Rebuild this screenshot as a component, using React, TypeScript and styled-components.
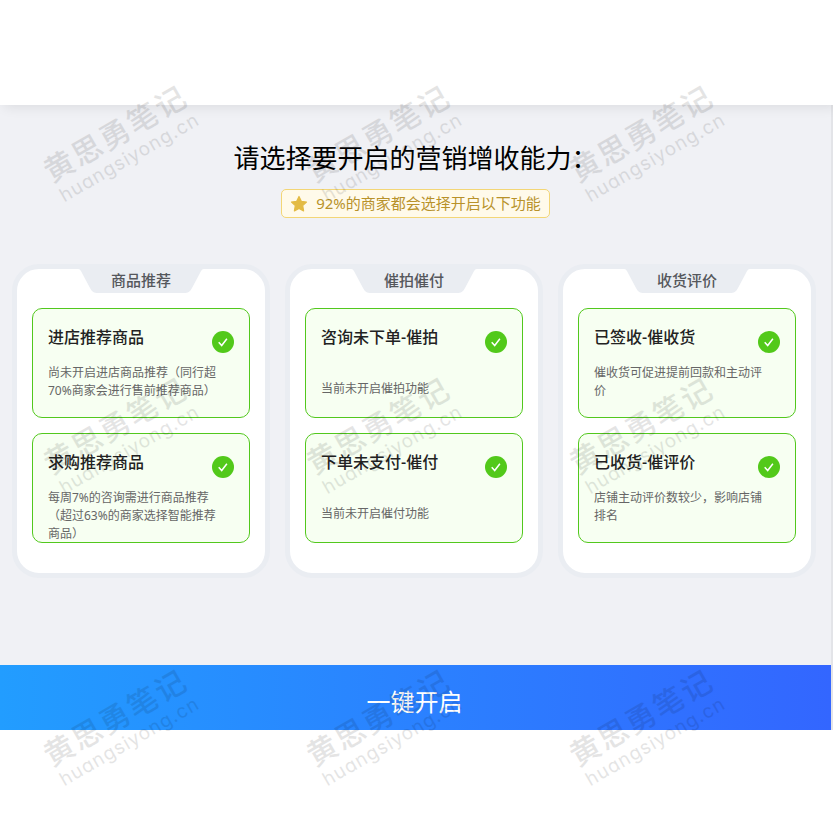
import React from "react";
import styled, { createGlobalStyle } from "styled-components";

const GlobalStyle = createGlobalStyle`
  * { box-sizing: border-box; }
  body { margin: 0; background: #fff; }
  body, button {
    font-family: "Noto Sans", "Noto Sans CJK SC", sans-serif;
    text-spacing-trim: space-all;
  }
`;

const Page = styled.div`
  position: relative;
  min-height: 100vh;
  overflow: hidden;
`;

const Header = styled.header`
  position: relative;
  height: 105px;
  background: #fff;
  box-shadow: 4px 2px 12px rgba(0, 0, 0, 0.09);
`;

const Panel = styled.main`
  display: flex;
  flex-direction: column;
  border-right: 2px solid #e3e4e8;
  background: #f0f1f5;
`;

const Intro = styled.section`
  display: flex;
  flex-direction: column;
  align-items: center;
  gap: 11px;
  padding-top: 33px;
`;

const Heading = styled.h1`
  margin: 0;
  font-size: 26px;
  line-height: 40px;
  font-weight: 400;
  color: #000;
`;

const Notice = styled.p`
  display: flex;
  align-items: center;
  gap: 8px;
  margin: 0;
  padding: 0 8px;
  border: 1px solid #f3d676;
  border-radius: 5px;
  background: #fffaea;
  color: #b8922a;
  font-size: 15px;
  line-height: 27px;
`;

const Columns = styled.div`
  display: grid;
  grid-template-columns: repeat(3, 1fr);
  gap: 15px;
  padding: 46px 15px 87px 12px;
`;

const Column = styled.section`
  display: flex;
  flex-direction: column;
  gap: 15px;
  padding: 0 15px 30px;
  border: 5px solid #eaedf2;
  border-radius: 27px;
  background: #fff;
`;

const Tab = styled.div`
  display: grid;
  justify-items: center;
  align-items: start;
  > * { grid-area: 1 / 1; }
`;

const TabShape = styled.svg`
  display: block;
`;

const TabTitle = styled.h2`
  margin: 0;
  font-size: 15px;
  line-height: 22px;
  font-weight: 500;
  color: #55575c;
`;

const Item = styled.label`
  display: grid;
  grid-template-columns: 1fr 22px;
  align-content: start;
  row-gap: 15px;
  height: 110px;
  padding: 16px 15px 0;
  border: 1px solid #52c81d;
  border-radius: 10px;
  background: #f7fff2;
  cursor: pointer;
`;

const ItemTitle = styled.span`
  font-size: 16px;
  line-height: 24px;
  font-weight: 500;
  color: #222;
`;

const Check = styled.input`
  appearance: none;
  width: 22px;
  height: 22px;
  margin: 0;
  grid-area: 1 / 1;
  border-radius: 50%;
  background: #fff;
  border: 1px solid #ccc;
  &:checked { background: #52c91a; border: 0; }
`;

const CheckWrap = styled.span`
  display: grid;
  align-self: end;
  place-items: center;
  margin-bottom: -4px;
`;

const Tick = styled.svg`
  grid-area: 1 / 1;
  pointer-events: none;
`;

const Description = styled.span<{ $single: boolean }>`
  grid-column: 1 / -1;
  max-width: 174px;
  font-size: 12px;
  line-height: ${(p) => (p.$single ? "50px" : "18px")};
  color: #666;
`;

const Submit = styled.button`
  height: 65px;
  padding: 8px 2px 0 0;
  border: 0;
  background: linear-gradient(90deg, #229dff, #3366ff);
  color: #fff;
  font-size: 24px;
  line-height: 36px;
  cursor: pointer;
`;

const Watermarks = styled.div`
  position: absolute;
  inset: -2px 0 0 -10px;
  display: grid;
  grid-template-columns: repeat(3, 263px);
  grid-auto-rows: 292px;
  pointer-events: none;
  user-select: none;
`;

const Mark = styled.div`
  display: flex;
  flex-direction: column;
  align-items: center;
  justify-content: center;
  transform: rotate(-30deg);
  color: #000;
  opacity: 0.1;
  white-space: nowrap;
`;

const MarkName = styled.span`
  font-size: 30px;
  line-height: 32px;
  font-weight: 500;
  letter-spacing: 2px;
`;

const MarkSite = styled.span`
  font-family: Inter, sans-serif;
  font-feature-settings: "cv11";
  font-size: 19px;
  line-height: 24px;
  letter-spacing: 1px;
`;

type Ability = { title: string; text: string; single?: boolean };

const groups: { name: string; items: Ability[] }[] = [
  {
    name: "商品推荐",
    items: [
      { title: "进店推荐商品", text: "尚未开启进店商品推荐（同行超70%商家会进行售前推荐商品）" },
      { title: "求购推荐商品", text: "每周7%的咨询需进行商品推荐（超过63%的商家选择智能推荐商品）" },
    ],
  },
  {
    name: "催拍催付",
    items: [
      { title: "咨询未下单-催拍", text: "当前未开启催拍功能", single: true },
      { title: "下单未支付-催付", text: "当前未开启催付功能", single: true },
    ],
  },
  {
    name: "收货评价",
    items: [
      { title: "已签收-催收货", text: "催收货可促进提前回款和主动评价" },
      { title: "已收货-催评价", text: "店铺主动评价数较少，影响店铺排名" },
    ],
  },
];

function Star() {
  return (
    <svg width="18" height="18" viewBox="0 0 18 18" aria-hidden="true">
      <path
        d="M9 1.5l2.3 4.8 5.2.7-3.8 3.6.9 5.3L9 13.4l-4.6 2.5.9-5.3L1.5 7l5.2-.7z"
        fill="#e3bb45"
        stroke="#e3bb45"
        strokeWidth="1.2"
        strokeLinejoin="round"
      />
    </svg>
  );
}

function AbilityItem({ title, text, single = false }: Ability) {
  return (
    <Item>
      <ItemTitle>{title}</ItemTitle>
      <CheckWrap>
        <Check type="checkbox" defaultChecked />
        <Tick width="22" height="22" viewBox="0 0 22 22" aria-hidden="true">
          <path d="M6.7 11.2l3 3.3 5.2-6.8" fill="none" stroke="#fff" strokeWidth="1.5" />
        </Tick>
      </CheckWrap>
      <Description $single={single}>{text}</Description>
    </Item>
  );
}

export default function App() {
  return (
    <Page>
      <GlobalStyle />
      <Header />
      <Panel>
        <Intro>
          <Heading>请选择要开启的营销增收能力：</Heading>
          <Notice>
            <Star />
            92%的商家都会选择开启以下功能
          </Notice>
        </Intro>
        <Columns>
          {groups.map((group) => (
            <Column key={group.name}>
              <Tab>
                <TabShape width="126" height="24" viewBox="0 0 126 24" aria-hidden="true">
                  <path d="M0 0h126c-2 0-3 2-4 4l-8 15c-2 4-4 5-8 5H20c-4 0-6-1-8-5L4 4C3 2 2 0 0 0z" fill="#eaedf2" />
                </TabShape>
                <TabTitle>{group.name}</TabTitle>
              </Tab>
              {group.items.map((item) => (
                <AbilityItem key={item.title} {...item} />
              ))}
            </Column>
          ))}
        </Columns>
        <Submit type="button">一键开启</Submit>
      </Panel>
      <Watermarks aria-hidden="true">
        {Array.from({ length: 9 }, (_, i) => (
          <Mark key={i}>
            <MarkName>黄思勇笔记</MarkName>
            <MarkSite>huangsiyong.cn</MarkSite>
          </Mark>
        ))}
      </Watermarks>
    </Page>
  );
}
